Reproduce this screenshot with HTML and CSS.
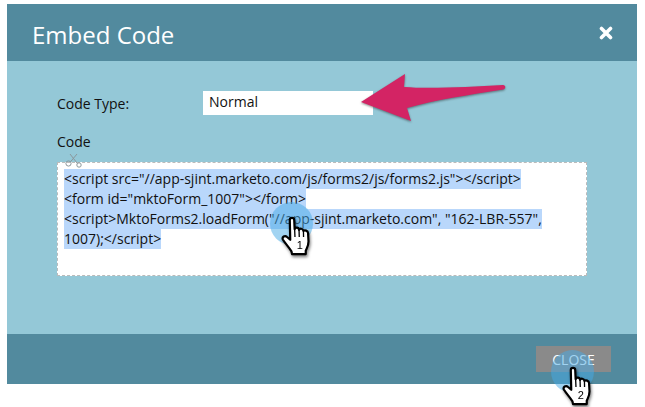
FILE: index.html

```html
<!DOCTYPE html>
<html lang="en">
<head>
  <meta charset="UTF-8" />
  <title>Embed Code</title>
  <link rel="stylesheet" href="styles.css">
</head>
<body>
  <div class="dialog">
    <div class="header">
      <h2>Embed Code</h2>
      <svg class="close-x" width="14" height="14" viewBox="0 0 14 14">
        <path d="M2.5 2.5 L11.5 11.5 M11.5 2.5 L2.5 11.5" stroke="#fff" stroke-width="3.6" stroke-linecap="round" fill="none"/>
      </svg>
    </div>

    <div class="content">
      <div class="row">
        <label class="type-label">Code Type:</label>
        <div class="select">Normal</div>
      </div>
      <label class="code-label">Code</label>
      <div class="codebox">
        <svg class="scissors" width="17" height="15" viewBox="0 0 17 15">
          <g fill="none" stroke="#8b979c" stroke-width="1">
            <circle cx="3.5" cy="10.5" r="2.6"/>
            <circle cx="14" cy="12" r="2.2"/>
            <path d="M5.5 8.8 L12 1 M12.4 10.5 L5 1"/>
          </g>
        </svg>
        <div class="line">&lt;script src="//app-sjint.marketo.com/js/forms2/js/forms2.js"&gt;&lt;/script&gt;</div>
        <div class="line">&lt;form id="mktoForm_1007"&gt;&lt;/form&gt;</div>
        <div class="line">&lt;script&gt;MktoForms2.loadForm("//app-sjint.marketo.com", "162-LBR-557",</div>
        <div class="line">1007);&lt;/script&gt;</div>
      </div>
    </div>

    <div class="footer">
      <button class="close-btn">CLOSE</button>
    </div>

    <!-- annotations drawn over the dialog -->
    <svg class="arrow" width="150" height="64" viewBox="0 0 150 64">
      <path fill="#d32464" d="M2 29 L46 1 L45 14 C70 16 110 14 144 12 C147 12 147 16 144 16.5 C110 22 75 27 48 35 L52 48 Z"/>
    </svg>

    <div class="click click-one"></div>
    <svg class="hand hand-one" width="33" height="42" viewBox="0 0 30 38">
      <path class="hand-fill" d="M8 3.5 C8 1 12 1 12 3.5 L12.4 12 C13 10 16 10 16.4 12.5 C17 11 20 11 20.4 13.5 C21.4 12.5 24.4 13 24.6 15.5 L25 23 C25 27 23.5 29 22.5 31.5 L22.5 34.5 L10 34.5 L9.5 32 C7 28 4 25 1.8 21.5 C0.5 19 3.5 17 5.5 19 L8.4 21.5 Z"/>
      <path class="hand-lines" d="M12.4 12 L12.7 19 M16.4 12.5 L16.6 19 M20.4 13.5 L20.5 19"/>
      <text x="17" y="30">1</text>
    </svg>

    <div class="click click-two"></div>
    <svg class="hand hand-two" width="33" height="42" viewBox="0 0 30 38">
      <path class="hand-fill" d="M8 3.5 C8 1 12 1 12 3.5 L12.4 12 C13 10 16 10 16.4 12.5 C17 11 20 11 20.4 13.5 C21.4 12.5 24.4 13 24.6 15.5 L25 23 C25 27 23.5 29 22.5 31.5 L22.5 34.5 L10 34.5 L9.5 32 C7 28 4 25 1.8 21.5 C0.5 19 3.5 17 5.5 19 L8.4 21.5 Z"/>
      <path class="hand-lines" d="M12.4 12 L12.7 19 M16.4 12.5 L16.6 19 M20.4 13.5 L20.5 19"/>
      <text x="17" y="30">2</text>
    </svg>
  </div>
</body>
</html>
```

FILE: styles.css

```css
html, body {
  height: 407px;
}
body {
  margin: 0;
  padding-top: 4px;
  box-sizing: border-box;
  background: #fff;
  font-family: "Open Sans", sans-serif;
  color: #111;
}
.dialog {
  position: relative;
  z-index: 1;
  width: 630px;
  height: 380px;
  margin-left: 7px;
  display: flex;
  flex-direction: column;
  background: #94c8d7;
}
.header {
  height: 57px;
  display: flex;
  align-items: center;
  justify-content: space-between;
  padding: 0 24px 0 25px;
  background: #528a9e;
}
h2 {
  margin: 0;
  padding-top: 3px;
  font-size: 24px;
  font-weight: 400;
  color: #fff;
}
.close-x {
  display: block;
}
.content {
  flex: 1;
  padding: 30px 50px 0;
}
.row {
  display: flex;
  align-items: center;
}
.type-label {
  width: 146px;
  font-size: 14px;
}
.select {
  width: 164px;
  height: 24px;
  padding-left: 6px;
  background: #fff;
  font-size: 14px;
  line-height: 22px;
}
.code-label {
  display: block;
  margin-top: 18px;
  font-size: 14px;
  line-height: 18px;
}
.codebox {
  position: relative;
  height: 114px;
  margin-top: 11px;
  padding: 6px 6px 0 6px;
  box-sizing: border-box;
  background: #fff;
  border: 1px dashed #bbb;
  font-size: 14px;
}
.line {
  width: fit-content;
  height: 20px;
  line-height: 20px;
  background: #b9d7fb;
}
.scissors {
  position: absolute;
  left: 7px;
  top: -10px;
}
.footer {
  height: 50px;
  display: flex;
  justify-content: flex-end;
  padding: 12px 26px 0 0;
  box-sizing: border-box;
  background: #528a9e;
}
.close-btn {
  width: 75px;
  height: 26px;
  padding: 0;
  border: 0;
  background: #8a8a8a;
  color: #fff;
  font-family: "Open Sans", sans-serif;
  font-size: 14px;
}
.arrow {
  position: absolute;
  left: 352px;
  top: 69px;
  filter: drop-shadow(0.5px 1.5px 1px rgba(40, 40, 40, 0.55));
}
.click {
  position: absolute;
  width: 43px;
  height: 43px;
  border-radius: 50%;
  background: rgba(70, 170, 230, 0.5);
}
.click-one {
  left: 263px;
  top: 198px;
}
.click-two {
  left: 544px;
  top: 346px;
}
.hand {
  position: absolute;
  overflow: visible;
  filter: drop-shadow(1px 2px 1.5px rgba(0, 0, 0, 0.5));
}
.hand-fill {
  fill: #fff;
  stroke: #000;
  stroke-width: 2;
  stroke-linejoin: round;
}
.hand-lines {
  fill: none;
  stroke: #000;
  stroke-width: 1.2;
}
.hand text {
  font-family: "Liberation Sans", sans-serif;
  font-size: 10px;
  text-anchor: middle;
  fill: #000;
}
.hand-one {
  left: 274px;
  top: 212px;
}
.hand-two {
  left: 555px;
  top: 362px;
}
```
